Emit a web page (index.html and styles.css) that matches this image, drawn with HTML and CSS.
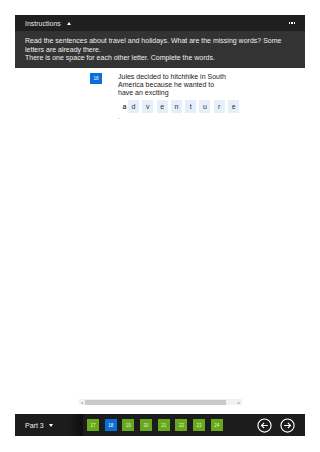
FILE: index.html
```html
<!DOCTYPE html>
<html lang="en">
<head>
  <meta charset="UTF-8" />
  <meta name="viewport" content="width=device-width, initial-scale=1.0" />
  <title>Part 3</title>
  <link rel="stylesheet" href="styles.css">
</head>
<body>
  <div class="page">

    <!-- INSTRUCTIONS -->
    <div class="instructions">
      <div class="instructions-head">
        <span class="instructions-title">Instructions <span class="caret-up"></span></span>
        <span class="more"><i></i><i></i><i></i></span>
      </div>
      <div class="instructions-body">
        Read the sentences about travel and holidays. What are the missing words? Some letters are already there.<br>
        There is one space for each other letter. Complete the words.
      </div>
    </div>

    <!-- QUESTION -->
    <div class="question">
      <div class="qnum">18</div>
      <div class="qbody">
        <p class="qtext">Jules decided to hitchhike in South America because he wanted to have an exciting</p>
        <div class="word">
          <span class="given">a</span>
          <span class="box">d</span>
          <span class="box">v</span>
          <span class="box">e</span>
          <span class="box">n</span>
          <span class="box">t</span>
          <span class="box">u</span>
          <span class="box">r</span>
          <span class="box">e</span>
        </div>
        <p class="dot">.</p>
      </div>
    </div>

    <div class="spacer"></div>

    <!-- SCROLLBAR -->
    <div class="hscroll">
      <span class="arrow">&#9666;</span>
      <div class="track"><div class="thumb"></div></div>
      <span class="arrow">&#9656;</span>
    </div>

    <!-- FOOTER -->
    <div class="footer">
      <span class="part">Part 3 <span class="caret-down"></span></span>
      <div class="nav-items">
        <span class="fade"></span>
        <span class="item">17</span>
        <span class="item current">18</span>
        <span class="item">19</span>
        <span class="item">20</span>
        <span class="item">21</span>
        <span class="item">22</span>
        <span class="item">23</span>
        <span class="item">24</span>
      </div>
      <div class="arrows">
        <button class="circle">
          <svg viewBox="0 0 16 16" width="15" height="15"><circle cx="8" cy="8" r="7" fill="none" stroke="#fff" stroke-width="1.2"/><path d="M11.5 8H4.8M7.6 5.2L4.8 8l2.8 2.8" fill="none" stroke="#fff" stroke-width="1.2"/></svg>
        </button>
        <button class="circle">
          <svg viewBox="0 0 16 16" width="15" height="15"><circle cx="8" cy="8" r="7" fill="none" stroke="#fff" stroke-width="1.2"/><path d="M4.5 8h6.7M8.4 5.2L11.2 8l-2.8 2.8" fill="none" stroke="#fff" stroke-width="1.2"/></svg>
        </button>
      </div>
    </div>

  </div>
</body>
</html>
```

FILE: styles.css
```css
* { margin: 0; padding: 0; box-sizing: border-box; }
body, html { width: 100%; height: 100%; font-family: 'Liberation Sans', Arial, sans-serif; background-color: #fff; color: #222; }

.page { display: flex; flex-direction: column; height: 452px; padding: 15px 15px 16px; }

/* Instructions */
.instructions { background: #333; }
.instructions-head { display: flex; justify-content: space-between; align-items: center; height: 16px; padding: 0 10px; background: #1f1f1f; color: #e6e6e6; font-size: 7px; }
.caret-up { display: inline-block; margin-left: 4px; vertical-align: 1px; border-left: 2.5px solid transparent; border-right: 2.5px solid transparent; border-bottom: 3px solid #fff; }
.more { display: flex; gap: 1px; }
.more i { width: 1.5px; height: 1.5px; background: #fff; }
.instructions-body { padding: 6px 10px 5px; font-size: 7px; line-height: 8.7px; color: #eee; }

/* Question */
.question { display: flex; margin: 4px 0 0 75px; }
.qnum { width: 12px; height: 11px; margin-top: 1px; background: #0b6fd8; color: #fff; font-size: 4.5px; display: flex; align-items: center; justify-content: center; }
.qbody { margin-left: 16px; }
.qtext { width: 112px; margin-top: 1px; font-size: 7px; line-height: 8px; color: #222; }
.word { display: flex; gap: 3.3px; margin: 3px 0 0 3px; }
.word span { display: flex; align-items: center; justify-content: center; height: 13px; font-size: 7px; color: #333; }
.word .given { width: 7px; margin-right: -3.3px; color: #000; }
.word .box { width: 11px; background: #e5effa; }
.dot { font-size: 7px; color: #888; line-height: 8px; }

.spacer { flex: 1; }

/* Scrollbar */
.hscroll { display: flex; align-items: center; width: 163px; height: 6px; margin: 0 0 9px 64px; background: #f1f1f1; }
.hscroll .arrow { font-size: 4px; color: #999; width: 6px; text-align: center; }
.track { flex: 1; height: 5px; }
.thumb { width: 141px; height: 5px; background: #c9c9c9; }

/* Footer */
.footer { display: flex; align-items: center; height: 22px; padding: 0 10px; background: #1c1c1c; }
.part { color: #eee; font-size: 7px; width: 43px; }
.caret-down { display: inline-block; margin-left: 3px; vertical-align: 1px; border-left: 2.5px solid transparent; border-right: 2.5px solid transparent; border-top: 3px solid #fff; }
.nav-items { display: flex; align-items: center; gap: 5.7px; }
.fade { width: 15px; height: 22px; margin-right: -1.7px; background: linear-gradient(to right, #1c1c1c, #0e0e0e); }
.item { width: 12px; height: 12px; display: flex; align-items: center; justify-content: center; background: #67a81c; color: #e8f5d8; font-size: 4.5px; }
.item.current { background: #0b6fd8; color: #fff; }
.arrows { display: flex; gap: 8px; margin-left: auto; }
.circle { display: flex; background: none; border: none; cursor: pointer; }
```
